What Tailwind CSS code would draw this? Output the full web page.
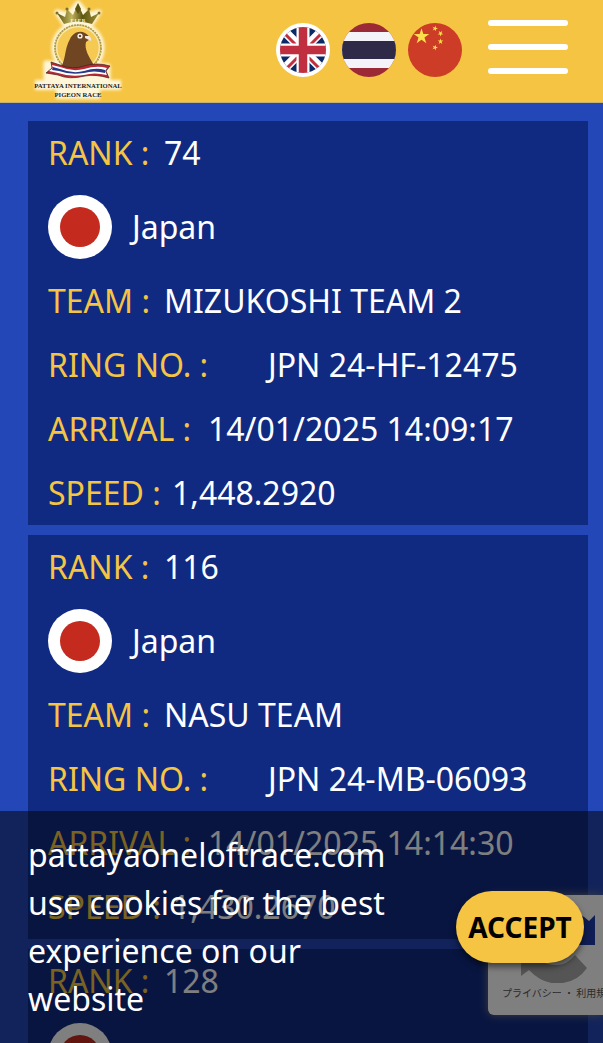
<!DOCTYPE html>
<html lang="en">
<head>
<meta charset="utf-8">
<meta name="viewport" content="width=device-width, initial-scale=1">
<title>Pattaya International Pigeon Race</title>
<script src="https://cdn.jsdelivr.net/npm/@tailwindcss/browser@4"></script>
</head>
<body class="bg-[#2447b8]">
<div class="relative flex h-screen flex-col overflow-hidden font-['Noto_Sans',sans-serif] text-[32px] text-white">
  <header class="flex h-[103px] shrink-0 items-start justify-between border-b border-[#c8b070] bg-[#f5c443] pr-[35px] pl-6">
    <a href="#" aria-label="Pattaya International Pigeon Race">
      <svg class="block h-[102px] w-[108px]" viewBox="0 0 108 102">
        <defs>
          <filter id="soft" x="-20%" y="-20%" width="140%" height="140%"><feGaussianBlur stdDeviation="1.500"/></filter>
          <linearGradient id="gold" x1="0" x2="1"><stop offset="0" stop-color="#59520f"/><stop offset=".35" stop-color="#c1b45c"/><stop offset=".6" stop-color="#5e5512"/><stop offset="1" stop-color="#9b8d35"/></linearGradient>
        </defs>
        <g filter="url(#soft)" fill="#fff6d8" stroke="#fff6d8" stroke-width="5" stroke-linejoin="round">
          <circle cx="54" cy="48" r="24"/>
          <path d="M33 12L40 23H68L75 12L64 15L54 3L44 15Z"/>
          <path d="M22 63L84 66L84 78H22Z"/>
          <path d="M11 85H97M32 94H76" stroke-width="10"/>
        </g>
        <circle cx="54" cy="48" r="23" fill="#f6c953" stroke="#a99b55" stroke-width="1.800" stroke-dasharray="2 .8"/>
        <circle cx="54" cy="48" r="21.300" fill="none" stroke="#f5ebbd" stroke-width="1.200"/>
        <path d="M33 13L40 24Q54 19 68 24L75 13L67 17L65 9L59 15L54 4L49 15L43 9L41 17Z" fill="url(#gold)"/>
        <path d="M54 3L57 9L54 14L51 9Z" fill="#5b5311"/>
        <g fill="#77702a"><circle cx="33" cy="13" r="1.500"/><circle cx="43" cy="9" r="1.500"/><circle cx="65" cy="9" r="1.500"/><circle cx="75" cy="13" r="1.500"/></g>
        <text x="54" y="22" text-anchor="middle" font-family="Liberation Serif" font-size="5" font-weight="700" fill="#fff5c8">P I P R</text>
        <path d="M35 70C42 63 40 49 46 39C49 33 55 30 61 33Q65 35 66 39L62 42C60 49 65 57 71 67L67 70Z" fill="#704522"/>
        <path d="M61 36L65 36Q68 38 67 41L61 38Z" fill="#eee6df"/>
        <circle cx="56" cy="36" r="2.600" fill="#fff"/><circle cx="56" cy="36" r="1.300" fill="#704522"/>
        <path d="M27 62L36 65Q49 70 60 66Q73 62 86 66L82 71L85 78Q71 74 61 76Q45 80 34 75L22 73L28 68Z" fill="#b72a35" stroke="#3d2020" stroke-width=".7"/>
        <path d="M28 65L36 67Q49 72 60 69Q73 65 83 68L81 71L83 75Q70 72 60 75Q46 77 34 73L25 71L29 68Z" fill="#fff"/>
        <path d="M29 67L36 69Q49 74 60 71Q72 67 81 70V73Q70 70 60 73Q46 75 35 71L28 70Z" fill="#273987"/>
        <text x="54" y="88" text-anchor="middle" font-family="Liberation Serif" font-size="6.700" font-weight="700" fill="#251b18">PATTAYA INTERNATIONAL</text>
        <text x="54" y="97" text-anchor="middle" font-family="Liberation Serif" font-size="6.700" font-weight="700" fill="#251b18">PIGEON RACE</text>
      </svg>
    </a>
    <nav class="flex h-full items-center pb-[2px]" aria-label="Language and menu">
      <a href="#en" aria-label="English" class="mr-3">
        <svg class="block size-[54px]" viewBox="0 0 54 54">
          <defs><clipPath id="uk"><circle cx="27" cy="27" r="23"/></clipPath></defs>
          <circle cx="27" cy="27" r="27" fill="#fff"/>
          <g clip-path="url(#uk)">
            <path d="M0 0H54V54H0Z" fill="#0b2a66"/>
            <path d="M4 4L50 50M50 4L4 50" stroke="#fff" stroke-width="9"/>
            <path d="M4 4L27 27M50 50L27 27" stroke="#c02f40" stroke-width="3" transform="translate(-1 1)"/>
            <path d="M50 4L27 27M4 50L27 27" stroke="#c02f40" stroke-width="3" transform="translate(1 1)"/>
            <path d="M27 0V54M0 27H54" stroke="#fff" stroke-width="13"/>
            <path d="M27 0V54M0 27H54" stroke="#c02f40" stroke-width="8.500"/>
          </g>
        </svg>
      </a>
      <a href="#th" aria-label="Thai" class="mr-3">
        <svg class="block size-[54px]" viewBox="0 0 54 54">
          <defs><clipPath id="th"><circle cx="27" cy="27" r="27"/></clipPath></defs>
          <g clip-path="url(#th)"><path d="M0 0H54V54H0Z" fill="#9b2936"/><path d="M0 9H54V45H0Z" fill="#f4f4f8"/><path d="M0 18H54V36H0Z" fill="#2e2a48"/></g>
        </svg>
      </a>
      <a href="#cn" aria-label="Chinese" class="mr-[26px]">
        <svg class="block size-[54px]" viewBox="0 0 54 54">
          <defs><path id="star" d="M0-10L2.250-3.100H9.500L3.640 1.200L5.880 8.100L0 3.820L-5.880 8.100L-3.640 1.200L-9.500-3.100H-2.250Z"/></defs>
          <circle cx="27" cy="27" r="27" fill="#cd3c26"/>
          <g fill="#fade4b"><use href="#star" transform="translate(13.500 13.500) scale(.82)"/><use href="#star" transform="translate(27 5.500) rotate(15) scale(.3)"/><use href="#star" transform="translate(32.500 10.500) rotate(35) scale(.3)"/><use href="#star" transform="translate(32.500 18.500) scale(.3)"/><use href="#star" transform="translate(27 24.500) rotate(20) scale(.3)"/></g>
        </svg>
      </a>
      <button type="button" aria-label="Menu" class="mb-[6px] flex flex-col gap-[18px]">
        <span class="block h-[6px] w-20 rounded-full bg-white"></span>
        <span class="block h-[6px] w-20 rounded-full bg-white"></span>
        <span class="block h-[6px] w-20 rounded-full bg-white"></span>
      </button>
    </nav>
  </header>

  <main class="flex min-h-0 flex-1 flex-col gap-[10px] pt-[18px] pr-[15px] pl-7">
    <article class="shrink-0 bg-[#102a82] px-5 leading-[64px]">
      <p class="flex"><span class="w-[116px] text-[#f5c443]">RANK :</span>74</p>
      <p class="flex h-[84px] items-center gap-5"><span class="flex size-16 items-center justify-center rounded-full bg-white"><span class="size-10 rounded-full bg-[#c42a1d]"></span></span>Japan</p>
      <p class="flex"><span class="w-[116px] text-[#f5c443]">TEAM :</span>MIZUKOSHI TEAM 2</p>
      <p class="flex"><span class="w-[220px] text-[#f5c443]">RING NO. :</span>JPN 24-HF-12475</p>
      <p class="flex"><span class="w-[160px] text-[#f5c443]">ARRIVAL :</span>14/01/2025 14:09:17</p>
      <p class="flex"><span class="w-[124px] text-[#f5c443]">SPEED :</span>1,448.2920</p>
    </article>
    <article class="shrink-0 bg-[#102a82] px-5 leading-[64px]">
      <p class="flex"><span class="w-[116px] text-[#f5c443]">RANK :</span>116</p>
      <p class="flex h-[84px] items-center gap-5"><span class="flex size-16 items-center justify-center rounded-full bg-white"><span class="size-10 rounded-full bg-[#c42a1d]"></span></span>Japan</p>
      <p class="flex"><span class="w-[116px] text-[#f5c443]">TEAM :</span>NASU TEAM</p>
      <p class="flex"><span class="w-[220px] text-[#f5c443]">RING NO. :</span>JPN 24-MB-06093</p>
      <p class="flex"><span class="w-[160px] text-[#f5c443]">ARRIVAL :</span>14/01/2025 14:14:30</p>
      <p class="flex"><span class="w-[124px] text-[#f5c443]">SPEED :</span>1,430.2670</p>
    </article>
    <article class="shrink-0 bg-[#102a82] px-5 leading-[64px]">
      <p class="flex"><span class="w-[116px] text-[#f5c443]">RANK :</span>128</p>
      <p class="flex h-[84px] items-center gap-5"><span class="flex size-16 items-center justify-center rounded-full bg-white"><span class="size-10 rounded-full bg-[#c42a1d]"></span></span>Japan</p>
    </article>
  </main>

  <aside class="absolute right-0 bottom-7 h-[120px] w-[115px] overflow-hidden rounded-l-md bg-white shadow-[0_0_10px_gray]" aria-label="reCAPTCHA">
    <svg class="block h-[88px] w-full" viewBox="0 0 115 88">
      <path d="M33 58V81L41 75Q56 91 75 88Q90 86 99 73L87 60Q79 70 68 70Q58 70 52 65L58 58Z" fill="#ababab"/>
      <path d="M107 20V50H77L88 39Q82 31 72 28L76 15Q90 16 101 26Z" fill="#1c3aa9"/>
    </svg>
    <p class="pl-[14px] font-['Noto_Sans_CJK_JP',sans-serif] text-[10px] leading-5 whitespace-nowrap text-[#555]">プライバシー ・ 利用規約</p>
  </aside>

  <section class="absolute inset-x-0 bottom-0 flex items-center justify-between bg-black/50 py-5 pr-[19px] pl-7" aria-label="Cookie notice">
    <p class="w-[388px] leading-[48px]">pattayaoneloftrace.com use cookies for the best experience on our website</p>
    <button type="button" class="h-[72px] w-32 rounded-full bg-[#f5c443] text-[28px] font-bold text-black shadow-[0_4px_6px_rgba(0,0,0,0.5)]">ACCEPT</button>
  </section>
</div>
</body>
</html>
